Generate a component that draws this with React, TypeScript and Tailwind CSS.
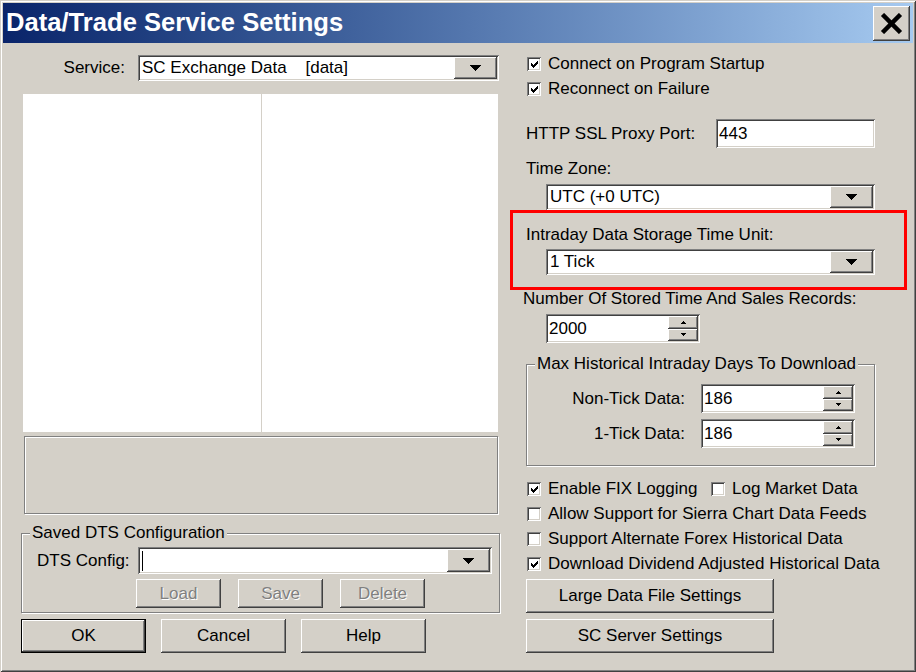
import React from "react";

const RAISED =
  "shadow-[inset_-1px_-1px_#404040,inset_1px_1px_#ffffff,inset_-2px_-2px_#808080,inset_2px_2px_#d4d0c8]";
const SUNKEN =
  "shadow-[inset_1px_1px_#808080,inset_-1px_-1px_#ffffff,inset_2px_2px_#404040,inset_-2px_-2px_#d4d0c8]";
const ETCH = "shadow-[inset_1px_1px_#ffffff,1px_1px_#ffffff]";

function Down() {
  return (
    <svg width="11" height="6" viewBox="0 0 11 6" shapeRendering="crispEdges">
      <path d="M0 0h11v1H0z M1 1h9v1H1z M2 2h7v1H2z M3 3h5v1H3z M4 4h3v1H4z M5 5h1v1H5z" fill="#000" />
    </svg>
  );
}

function SmallUp() {
  return (
    <svg width="5" height="3" viewBox="0 0 5 3" shapeRendering="crispEdges">
      <path d="M2 0h1v1H2z M1 1h3v1H1z M0 2h5v1H0z" fill="#000" />
    </svg>
  );
}

function SmallDown() {
  return (
    <svg width="5" height="3" viewBox="0 0 5 3" shapeRendering="crispEdges">
      <path d="M0 0h5v1H0z M1 1h3v1H1z M2 2h1v1H2z" fill="#000" />
    </svg>
  );
}

function Combo({ text, className, caret }: { text: string; className: string; caret?: boolean }) {
  return (
    <div className={`flex bg-white p-[2px] ${SUNKEN} ${className}`}>
      <div className="flex-1 flex items-center pl-[2px] whitespace-pre overflow-hidden">
        {caret ? <div className="w-[1px] h-[20px] bg-black" /> : text}
      </div>
      <div className={`w-[43px] flex items-center justify-center bg-[#d4d0c8] ${RAISED}`}>
        <Down />
      </div>
    </div>
  );
}

function Field({ value, className }: { value: string; className: string }) {
  return (
    <div className={`flex items-center bg-white p-[2px] pl-[3px] ${SUNKEN} ${className}`}>{value}</div>
  );
}

function Spin({ value, className }: { value: string; className: string }) {
  return (
    <div className={`flex bg-white p-[2px] ${SUNKEN} ${className}`}>
      <div className="flex-1 flex items-center pl-[1px]">{value}</div>
      <div className="w-[30px] flex flex-col">
        <div className={`flex-1 flex items-center justify-center bg-[#d4d0c8] ${RAISED}`}>
          <SmallUp />
        </div>
        <div className={`flex-1 flex items-center justify-center bg-[#d4d0c8] ${RAISED}`}>
          <SmallDown />
        </div>
      </div>
    </div>
  );
}

function CheckBox({ checked }: { checked: boolean }) {
  return (
    <div className={`w-[14px] h-[14px] shrink-0 bg-white flex items-center justify-center ${SUNKEN}`}>
      {checked && (
        <svg width="7" height="7" viewBox="0 0 7 7" shapeRendering="crispEdges">
          <path
            d="M6 0h1v1H6z M5 1h2v1H5z M0 2h1v1H0z M4 2h3v1H4z M0 3h2v1H0z M3 3h3v1H3z M0 4h5v1H0z M1 5h3v1H1z M2 6h1v1H2z"
            fill="#000"
          />
        </svg>
      )}
    </div>
  );
}

function CheckRow({ checked, label, className }: { checked: boolean; label: string; className?: string }) {
  return (
    <div className={`flex items-center h-[20px] ${className ?? ""}`}>
      <CheckBox checked={checked} />
      <span className="ml-[7px] whitespace-nowrap">{label}</span>
    </div>
  );
}

function Button({ children, className }: { children: React.ReactNode; className: string }) {
  return (
    <div className={`flex items-center justify-center bg-[#d4d0c8] ${RAISED} ${className}`}>{children}</div>
  );
}

function DisabledButton({ children }: { children: React.ReactNode }) {
  return (
    <div
      className={`w-[85px] h-[29px] flex items-center justify-center bg-[#d4d0c8] text-[#808080] [text-shadow:1px_1px_0_#ffffff] ${RAISED}`}
    >
      {children}
    </div>
  );
}

export default function App() {
  return (
    <div className="w-[916px] h-[672px] bg-[#d4d0c8] p-[3px] overflow-hidden text-black text-[17px] leading-[20px] font-['Liberation_Sans',Arial,sans-serif] shadow-[inset_1px_1px_#d4d0c8,inset_-1px_-1px_#404040,inset_2px_2px_#ffffff,inset_-2px_-2px_#808080]">
      {/* Title bar */}
      <div className="h-[40px] flex items-center bg-linear-to-r from-[#0a246a] to-[#a6caf0]">
        <span className="pl-[3px] text-white font-bold text-[25.6px] leading-none">Data/Trade Service Settings</span>
        <div className={`ml-auto mr-[3px] w-[37px] h-[35px] bg-[#d4d0c8] flex items-center justify-center ${RAISED}`}>
          <svg width="23" height="21" viewBox="0 0 23 21">
            <path d="M2.5 1.5 L20.5 19.5 M20.5 1.5 L2.5 19.5" stroke="#000" strokeWidth="4.5" />
          </svg>
        </div>
      </div>

      {/* Body */}
      <div className="flex">
        {/* Left column */}
        <div className="ml-[18px] w-[479px] flex flex-col">
          <div className="mt-[12px] h-[26px] flex items-center">
            <div className="w-[117px] pr-[13px] text-right">Service:</div>
            <Combo text="SC Exchange Data    [data]" className="w-[361px] h-[26px]" />
          </div>

          <div className="mt-[13px] ml-[2px] w-[475px] h-[338px] bg-white flex">
            <div className="w-[239px] border-r border-[#d4d0c8]" />
          </div>

          <div className={`mt-[4px] ml-[3px] w-[474px] h-[78px] border border-[#808080] ${ETCH}`} />

          <fieldset className={`mt-[9px] w-[479px] border border-[#808080] pb-[4px] ${ETCH}`}>
            <legend className="ml-[8px] px-[2px] h-[20px] bg-[#d4d0c8]">Saved DTS Configuration</legend>
            <div className="mt-[4px] h-[27px] flex items-center">
              <div className="w-[116px] pl-[15px]">DTS Config:</div>
              <Combo text="" caret className="w-[354px] h-[27px]" />
            </div>
            <div className="mt-[5px] ml-[114px] flex gap-[17px]">
              <DisabledButton>Load</DisabledButton>
              <DisabledButton>Save</DisabledButton>
              <DisabledButton>Delete</DisabledButton>
            </div>
          </fieldset>

          <div className="mt-[6px] flex gap-[15px]">
            <div className="w-[125px] h-[34px] flex items-center justify-center bg-[#d4d0c8] shadow-[inset_0_0_0_1px_#000000,inset_-2px_-2px_#404040,inset_2px_2px_#ffffff,inset_-3px_-3px_#808080]">
              OK
            </div>
            <Button className="w-[125px] h-[34px]">Cancel</Button>
            <Button className="w-[125px] h-[34px]">Help</Button>
          </div>
        </div>

        {/* Right column */}
        <div className="ml-[7px] w-[400px] flex flex-col">
          <CheckRow checked label="Connect on Program Startup" className="mt-[11px] pl-[20px]" />
          <CheckRow checked label="Reconnect on Failure" className="mt-[5px] pl-[20px]" />

          <div className="mt-[20px] h-[29px] flex items-center">
            <div className="w-[209px] pl-[19px]">HTTP SSL Proxy Port:</div>
            <Field value="443" className="w-[159px] h-[29px]" />
          </div>

          <div className="mt-[11px] h-[20px] pl-[19px] flex items-center">Time Zone:</div>
          <Combo text="UTC (+0 UTC)" className="mt-[5px] ml-[39px] w-[329px] h-[26px]" />

          <div className="ml-[3px] w-[397px] h-[80px] border-[3px] border-[#ff0000] flex flex-col">
            <div className="mt-[12px] h-[20px] pl-[13px] flex items-center">Intraday Data Storage Time Unit:</div>
            <Combo text="1 Tick" className="mt-[4px] ml-[33px] w-[329px] h-[26px]" />
          </div>

          <div className="h-[18px] pl-[16px] flex items-center">Number Of Stored Time And Sales Records:</div>
          <Spin value="2000" className="mt-[6px] ml-[39px] w-[154px] h-[29px]" />

          <fieldset className={`mt-[11px] ml-[19px] w-[349px] border border-[#808080] pb-[17px] ${ETCH}`}>
            <legend className="ml-[8px] px-[2px] h-[20px] bg-[#d4d0c8]">Max Historical Intraday Days To Download</legend>
            <div className="mt-[10px] h-[29px] flex items-center">
              <div className="w-[158px] text-right">Non-Tick Data:</div>
              <Spin value="186" className="ml-[16px] w-[154px] h-[29px]" />
            </div>
            <div className="mt-[6px] h-[29px] flex items-center">
              <div className="w-[158px] text-right">1-Tick Data:</div>
              <Spin value="186" className="ml-[16px] w-[154px] h-[29px]" />
            </div>
          </fieldset>

          <div className="mt-[13px] pl-[20px] flex">
            <CheckRow checked label="Enable FIX Logging" className="w-[184px]" />
            <CheckRow checked={false} label="Log Market Data" />
          </div>
          <CheckRow checked={false} label="Allow Support for Sierra Chart Data Feeds" className="mt-[5px] pl-[20px]" />
          <CheckRow checked={false} label="Support Alternate Forex Historical Data" className="mt-[5px] pl-[20px]" />
          <CheckRow checked label="Download Dividend Adjusted Historical Data" className="mt-[5px] pl-[20px]" />

          <Button className="mt-[5px] ml-[19px] w-[248px] h-[34px]">Large Data File Settings</Button>
          <Button className="mt-[6px] ml-[19px] w-[248px] h-[34px]">SC Server Settings</Button>
        </div>
      </div>
    </div>
  );
}
